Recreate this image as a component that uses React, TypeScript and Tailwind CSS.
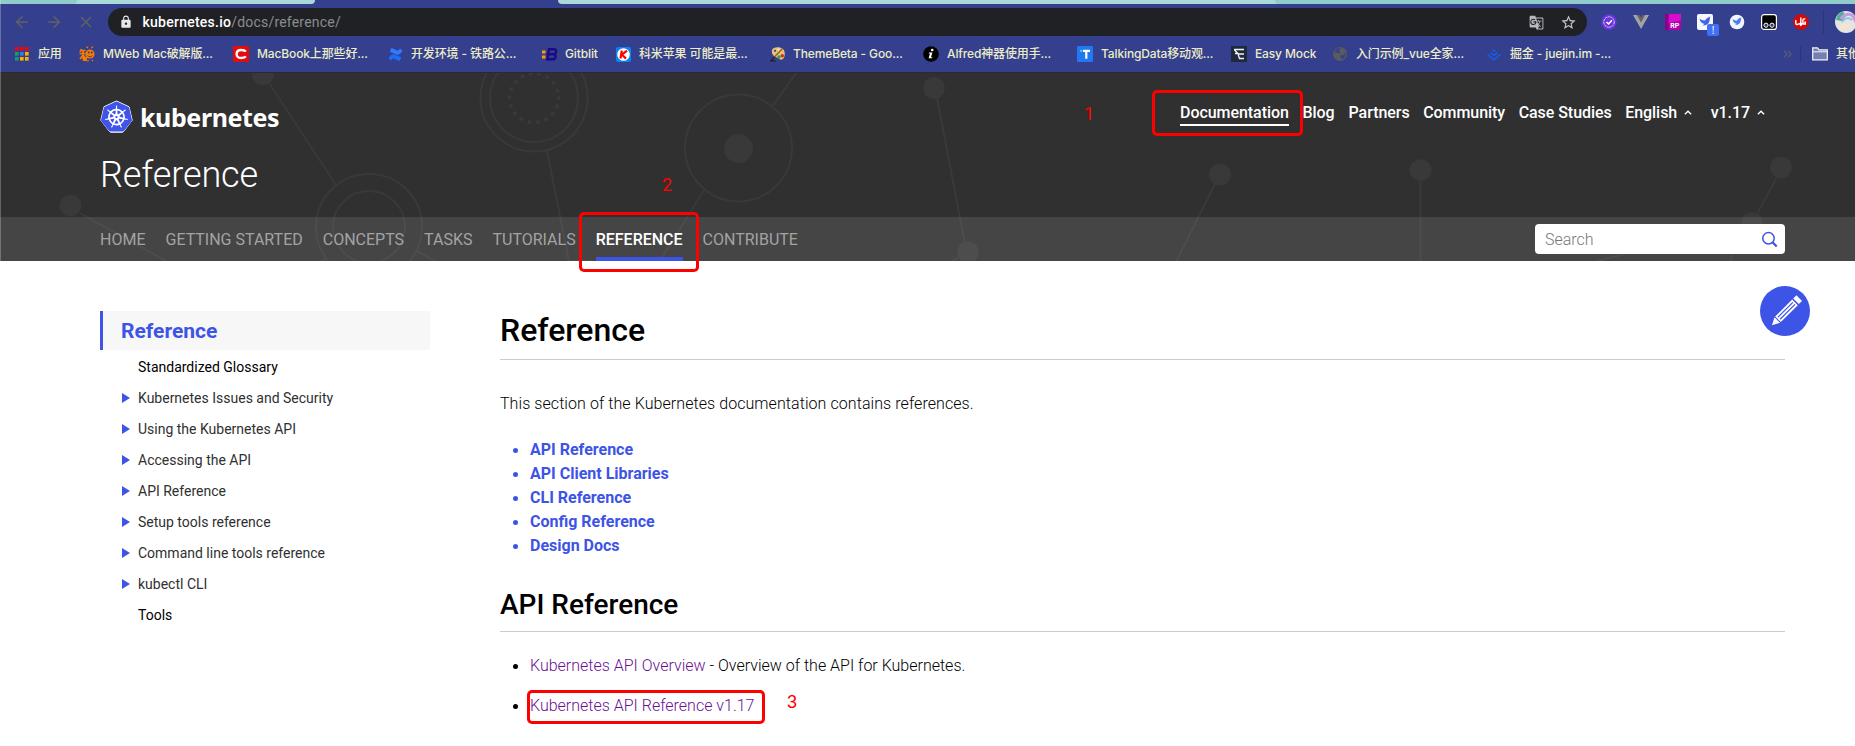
import React from "react";
import { SiKubernetes } from "react-icons/si";
import { MdLock, MdGTranslate, MdStarBorder } from "react-icons/md";
import { FiArrowLeft, FiArrowRight, FiX } from "react-icons/fi";

const APP_COLORS = ["#f00", "#f00", "#f00", "#12a06a", "#2f7df6", "#fbb000", "#12a06a", "#fbb000", "#fbb000"];

function AppsIcon() {
  return (
    <svg width="14" height="14" viewBox="0 0 14 14" className="shrink-0">
      {APP_COLORS.map((c, i) => (
        <rect key={i} x={(i % 3) * 5} y={Math.floor(i / 3) * 5} width="3.6" height="3.6" fill={c} />
      ))}
    </svg>
  );
}

function MwebIcon() {
  return (
    <svg width="16" height="16" viewBox="0 0 16 16" className="shrink-0">
      <g stroke="#f57c00" fill="none" strokeWidth="1.6">
        <path d="M2.5 3 1 6M2 4.5h4.5M.5 7.5h6M4 5v4l-3 4M4 9l2.5 3" />
        <path d="M9 2 7.5.8M12.5 2l1.5-1.4M9.5 14l-1 1.5M13 14l1 1.2" strokeWidth="1.2" />
      </g>
      <circle cx="11" cy="8" r="4.6" fill="#f57c00" />
      <circle cx="9.8" cy="6.5" r="1" fill="#34408d" />
      <circle cx="12.8" cy="6.5" r="1" fill="#34408d" />
      <path d="M8.8 9.5c1 1.8 3.6 1.8 4.6 0" stroke="#34408d" fill="none" />
      <path d="M3 11h5v4H4z" fill="#f57c00" />
    </svg>
  );
}

function RedCIcon() {
  return (
    <svg width="16" height="16" viewBox="0 0 16 16" className="shrink-0">
      <rect width="16" height="16" fill="#e30b0b" />
      <path d="M12.8 5.6C12 4.4 10.300 4 8.300 4 5.400 4 3.600 5.600 3.600 8s1.800 4 4.700 4c2 0 3.700-.4 4.500-1.600" fill="none" stroke="#fff" strokeWidth="2.3" />
    </svg>
  );
}

function ConfluenceIcon() {
  return (
    <svg width="15" height="15" viewBox="0 0 15 15" className="shrink-0">
      <path d="M.6 11.300C3 7 5 6.400 8.500 8.200l4.800 2.300-1.700 3.800-4.600-2.200c-2-1-2.700-.6-4 1.500z" fill="#1f6cf5" />
      <path d="M14.400 3.700C12 8 10 8.600 6.500 6.800L1.700 4.500 3.400.7 8 2.900c2 1 2.700.6 4-1.500z" fill="#2f7bff" />
    </svg>
  );
}

function GitblitIcon() {
  return (
    <svg width="16" height="15" viewBox="0 0 16 15" className="shrink-0">
      <rect x="0" y="3.500" width="3.500" height="3" fill="#ff9a00" />
      <rect x="0" y="8.500" width="3.500" height="3" fill="#ff9a00" />
      <path d="M7 2.200h5.200c2.600 0 2.600 4.400-.2 4.900 2.600.5 1.800 5.200-1.200 5.200H5.300z M4.500 7.200H12" fill="none" stroke="#1a0a86" strokeWidth="2.400" />
    </svg>
  );
}

function KIcon() {
  return (
    <svg width="15" height="15" viewBox="0 0 15 15" className="shrink-0">
      <rect width="15" height="15" rx="2" fill="#0a84ee" />
      <circle cx="7.500" cy="7.500" r="6.300" fill="#fff" />
      <path d="M5.800 3.500 4.500 11.500M11 3.700 6 7.700l4 3.900" fill="none" stroke="#f00" strokeWidth="2.200" />
    </svg>
  );
}

function PaletteIcon() {
  return (
    <svg width="16" height="16" viewBox="0 0 16 16" className="shrink-0">
      <path d="M2 4C3 .8 10 .5 13 3c3 2.800 2 9.600-1 10.500-2.600.8-3-1.800-5-2C4.500 11.200 1 8 2 4z" fill="#e8c07c" />
      <path d="M12.500 2.500 4 11.500" stroke="#8a5a22" strokeWidth="1.200" />
      <path d="M4.500 11 .5 14.800l5 .2" stroke="#222" strokeWidth="1.300" fill="none" />
      <circle cx="5" cy="4.800" r="1.100" fill="#34408d" />
      <circle cx="9" cy="11" r="1.700" fill="#18a84b" />
      <circle cx="12.300" cy="9.700" r="1.700" fill="#e1261c" />
      <circle cx="8.500" cy="3.600" r="1.100" fill="#fff2a8" />
    </svg>
  );
}

function InfoIcon() {
  return (
    <svg width="16" height="16" viewBox="0 0 16 16" className="shrink-0">
      <circle cx="8" cy="8" r="7.800" fill="#000" />
      <circle cx="9.200" cy="4" r="1.300" fill="#fff" />
      <path d="M6 6.500h3.400L8 11.200h1.200v1H5.600L7 7.500H5.800z" fill="#fff" />
    </svg>
  );
}

function TalkingIcon() {
  return (
    <svg width="16" height="16" viewBox="0 0 16 16" className="shrink-0">
      <rect width="16" height="16" rx="1" fill="#2477f2" />
      <path d="M6 4.800h7M9.300 4v8.800" stroke="#fff" strokeWidth="2.200" />
      <rect x="3" y="3.800" width="2.400" height="2" fill="#22e6c4" />
    </svg>
  );
}

function EasyMockIcon() {
  return (
    <svg width="16" height="16" viewBox="0 0 16 16" className="shrink-0">
      <rect width="16" height="16" fill="#1d2a3c" />
      <path d="M3 3.500h10M3.500 4l4 4H13M4 7.500h2M7 8l1.500 4.500H13" fill="none" stroke="#f4f4f4" strokeWidth="1.300" />
    </svg>
  );
}

function GlobeIcon() {
  return (
    <svg width="14" height="14" viewBox="0 0 14 14" className="shrink-0">
      <circle cx="7" cy="7" r="7" fill="#5a5b5f" />
      <path d="M1.500 5C3 5.500 5 6.500 7 6.200 7.500 4.500 5.500 4 6.500 2L9 1C5 0 2 2 1.500 5zM7 8.500c2-.5 4 .5 4.500-1.500l1-2c1 4-1 7-4 7.700C9 11 7 10.500 7 8.500z" fill="#36428c" />
    </svg>
  );
}

function JuejinIcon() {
  return (
    <svg width="14" height="13" viewBox="0 0 14 13" className="shrink-0">
      <path d="M.6 6.500 7 11.700l6.400-5.200M3.500 4.700 7 7.400l3.500-2.700M5.600 2 7 3.200 8.400 2" fill="none" stroke="#1660f5" strokeWidth="1.400" />
    </svg>
  );
}

const bookmarks: { label: string; icon: React.ReactNode; left: string; text: string }[] = [
  { label: "应用", icon: <AppsIcon />, left: "w-[64px]", text: "ml-[9px]" },
  { label: "MWeb Mac破解版...", icon: <MwebIcon />, left: "w-[154px]", text: "ml-[8px]" },
  { label: "MacBook上那些好...", icon: <RedCIcon />, left: "w-[155px]", text: "ml-[8px]" },
  { label: "开发环境 - 铁路公...", icon: <ConfluenceIcon />, left: "w-[154px]", text: "ml-[8px]" },
  { label: "Gitblit", icon: <GitblitIcon />, left: "w-[74px]", text: "ml-[7px]" },
  { label: "科米苹果 可能是最...", icon: <KIcon />, left: "w-[154px]", text: "ml-[8px]" },
  { label: "ThemeBeta - Goo...", icon: <PaletteIcon />, left: "w-[153px]", text: "ml-[7px]" },
  { label: "Alfred神器使用手...", icon: <InfoIcon />, left: "w-[154px]", text: "ml-[8px]" },
  { label: "TalkingData移动观...", icon: <TalkingIcon />, left: "w-[154px]", text: "ml-[8px]" },
  { label: "Easy Mock", icon: <EasyMockIcon />, left: "w-[102px]", text: "ml-[8px]" },
  { label: "入门示例_vue全家...", icon: <GlobeIcon />, left: "w-[154px]", text: "ml-[9px]" },
  { label: "掘金 - juejin.im -...", icon: <JuejinIcon />, left: "w-[296px]", text: "ml-[9px]" },
];

function Extensions() {
  return (
    <div className="flex items-center">
      <svg width="16" height="16" viewBox="0 0 16 16" className="ml-[14px]">
        <circle cx="8" cy="8" r="7.700" fill="#6a35d9" />
        <circle cx="8" cy="8" r="5.200" fill="none" stroke="#d9ccff" strokeWidth="1" strokeDasharray="2.200 .6" />
        <path d="m5.500 8 2 1.900 3.500-3.700" fill="none" stroke="#fff" strokeWidth="1.500" />
      </svg>
      <svg width="16" height="14" viewBox="0 0 16 14" className="ml-4">
        <path d="M0 0h4l4 7 4-7h4L8 14z" fill="#a3a3a3" />
        <path d="M4 0h2.500L8 2.800 9.500 0H12L8 7z" fill="#666" />
      </svg>
      <svg width="16" height="16" viewBox="0 0 16 16" className="ml-4">
        <rect width="16" height="16" fill="#b400ac" />
        <rect width="3.500" height="16" fill="#8d0087" />
        <path d="M4 0h12v6L4 9z" fill="#d80bd0" />
        <text x="5.200" y="14" fontSize="7" fontWeight="700" fill="#fff" fontFamily="Roboto, sans-serif">RP</text>
      </svg>
      <div className="relative ml-4 h-4 w-4">
        <svg width="16" height="16" viewBox="0 0 16 16">
          <rect width="16" height="16" rx="2" fill="#f6f8ff" />
          <path d="M2.500 4.500C5 6.500 7 6.500 8 6.500 9 4.500 10.500 3.500 13.500 2.500 12.500 4 13 5 12.500 7c-.6 3-3.500 4.800-7 4.500l2-1.500C4.500 9.500 3 7.500 2.500 4.500z" fill="#4662e8" />
        </svg>
        <span className="absolute left-[10px] top-[10px] flex h-3 w-3 items-center justify-center rounded-[2px] bg-[#4270f4] text-[10px] leading-none text-white">!</span>
      </div>
      <svg width="16" height="16" viewBox="0 0 16 16" className="ml-4">
        <circle cx="8" cy="8" r="7.300" fill="#f3f8ff" />
        <path d="M3.500 5C5.500 6.500 7 6.800 8 6.600 8.600 5 10 4 12.500 3.400 11.700 4.800 12 5.600 11.700 7.200c-.6 2.600-2.700 4-5.700 3.800l1.700-1.300C5.200 9.300 3.900 7.500 3.500 5z" fill="#4c7cf0" />
      </svg>
      <svg width="16" height="16" viewBox="0 0 16 16" className="ml-4">
        <rect x=".6" y=".6" width="14.800" height="14.800" rx="2.500" fill="#000" stroke="#fff" strokeWidth="1.200" />
        <circle cx="5" cy="11.200" r="2.100" fill="#2b3c6b" stroke="#fff" strokeWidth="1" />
        <circle cx="11" cy="11.200" r="2.100" fill="#2b3c6b" stroke="#fff" strokeWidth="1" />
      </svg>
      <svg width="16" height="16" viewBox="0 0 16 16" className="ml-4">
        <circle cx="8" cy="8" r="7.900" fill="#d20a0a" />
        <path d="M2.800 6v3.300c0 1.600 2.400 1.600 2.600.3M7.800 3.600v6M12.300 5.200c-1.600-.9-2.400.2-2.400 1.300v3.500h2.400V8.200h-1" fill="none" stroke="#fff" strokeWidth="1.400" />
        <path d="M5.200 9h5.200l-2.600 3.400z" fill="#fff" />
      </svg>
      <span className="ml-[14px] h-[24px] w-px bg-[#2a3679]" />
      <svg width="22" height="22" viewBox="0 0 22 22" className="ml-[11px] shrink-0">
        <circle cx="11" cy="11" r="11" fill="#e4e4e2" />
        <path d="M1 9A11 11 0 0 1 8 .6l3 4.400-4 5z" fill="#4fae92" />
        <path d="M6 8c3-5 8-6 12-3l3 6" fill="none" stroke="#c49be0" strokeWidth="3" />
        <path d="M7 11c2-4 7-5 10-2" fill="none" stroke="#7fc7e8" strokeWidth="2" />
        <path d="M4 17c1-4 4-5 8-4l3-3-1 6-6 4z" fill="#f5e4cf" />
      </svg>
    </div>
  );
}

function BrowserChrome() {
  return (
    <div className="h-[72px] bg-[#34408d]">
      <div className="flex h-1">
        <div className="w-[315px] overflow-hidden rounded-br-[5px] bg-[#a9dad9]">
          <div className="h-1 w-[77px] rounded-br-[4px] bg-[#90cccb]" />
        </div>
        <div className="w-[243px]" />
        <div className="flex flex-1 justify-end rounded-bl-[5px] bg-[#a9dad9]">
          <div className="w-[580px] rounded-bl-[4px] bg-[#90cccb]" />
        </div>
      </div>
      <div className="flex h-9 items-center overflow-hidden">
        <div className="flex w-[108px] shrink-0 items-center gap-[14px] pl-[13px] text-[#606167]">
          <FiArrowLeft size={18} />
          <FiArrowRight size={18} />
          <FiX size={18} />
        </div>
        <div className="flex h-7 w-[1479px] shrink-0 items-center rounded-full bg-[#202124] pl-[11px] pr-[10px] font-['Roboto',sans-serif] text-[14px]">
          <MdLock size={14} className="text-[#e8e8e8]" />
          <span className="ml-[9.500px] font-medium tracking-[0.25px] text-white">kubernetes.io</span>
          <span className="tracking-[0.2px] text-[#8b8c8f]">/docs/reference/</span>
          <span className="flex-1" />
          <MdGTranslate size={15} className="text-[#b9babd]" />
          <MdStarBorder size={17} className="ml-4 text-[#c8c9cc]" />
        </div>
        <Extensions />
      </div>
      <div className="flex h-7 items-center overflow-hidden whitespace-nowrap pl-[15px] font-['Inter','Noto_Sans_CJK_SC',sans-serif] text-[12px] font-medium text-[#ecedc6]">
        {bookmarks.map((b) => (
          <div key={b.label} className={`flex shrink-0 items-center ${b.left}`}>
            {b.icon}
            <span className={`tracking-[-0.13px] ${b.text}`}>{b.label}</span>
          </div>
        ))}
        <svg width="9" height="8" viewBox="0 0 9 8" className="shrink-0">
          <path d="m1 .8 3 3.200-3 3.200M5 .8 8 4 5 7.200" fill="none" stroke="#555a78" strokeWidth="1.400" />
        </svg>
        <span className="ml-[8px] h-4 w-px shrink-0 bg-[#2a3679]" />
        <svg width="16" height="14" viewBox="0 0 16 14" className="ml-[11px] shrink-0">
          <path d="M.7 12.800V.9h4.800l1.500 2h8.300v9.900z" fill="#767fb4" stroke="#f5f5f5" strokeWidth="1.200" />
          <path d="M.7 4.800h14.600" stroke="#f5f5f5" />
        </svg>
        <span className="ml-[8px] w-[19px] shrink-0 overflow-hidden">其他</span>
      </div>
    </div>
  );
}

function NetworkBackdrop() {
  return (
    <svg className="absolute inset-0" width="1855" height="189" viewBox="0 72 1855 189">
      <g fill="none" stroke="#393939" strokeWidth="2">
        <path d="M269 83 336 185M80 213l86 48M326 259l-7 3M417 251l22 12M547 151l22 110h22M772.500 106 797 72M704 190l-44 71M937 98l28 146M950 262l12-6M1215 184l-39 78M1420.500 180v82M1777 177l-20 37M1730 262l5-13M1593 262l32-8" />
        <circle cx="369" cy="227" r="53" />
        <circle cx="369" cy="227" r="36" />
        <circle cx="534" cy="98" r="53.500" />
        <circle cx="534" cy="98" r="44" />
        <circle cx="738.500" cy="148" r="53.500" />
        <circle cx="534" cy="98" r="24.500" strokeWidth="4" strokeLinecap="round" strokeDasharray="0.100 8.450" />
      </g>
      <g fill="#393939">
        <circle cx="263" cy="74.500" r="10.800" />
        <circle cx="70.500" cy="205.500" r="10.800" />
        <circle cx="738.500" cy="148.500" r="14.500" />
        <circle cx="934" cy="88" r="10.800" />
        <circle cx="968" cy="252" r="10.800" />
        <circle cx="1220" cy="174.500" r="10.800" />
        <circle cx="1420.500" cy="170" r="10.800" />
        <circle cx="1781" cy="167.500" r="10.800" />
        <circle cx="1752" cy="223" r="10.800" />
      </g>
    </svg>
  );
}

function Caret() {
  return (
    <svg width="8" height="5" viewBox="0 0 8 5" className="mb-px">
      <path d="m.9 4.300 3.100-3 3.100 3" fill="none" stroke="#fff" strokeWidth="1.400" />
    </svg>
  );
}

const sections = ["HOME", "GETTING STARTED", "CONCEPTS", "TASKS", "TUTORIALS", "REFERENCE", "CONTRIBUTE"];

function SiteHeader() {
  return (
    <header className="relative bg-[#303030] text-white">
      <NetworkBackdrop />
      <div className="relative h-[145px] border-t border-[#28293a] pl-[100px]">
        <div className="flex h-[71px] justify-between pt-[27px]">
          <div className="flex h-[34px] items-center">
            <div className="relative h-[34px] w-[33px]">
              <svg width="33" height="34" viewBox="0 0 33 34" className="absolute inset-0">
                <path d="M16.500 1 29 6.800l3.200 13.400L23.600 31.500a2 2 0 0 1-1.500.7H11a2 2 0 0 1-1.500-.7L.8 20.200 4 6.800z" fill="#fff" stroke="#fff" strokeLinejoin="round" />
              </svg>
              <SiKubernetes size={31} className="absolute left-[1px] top-[1px] text-[#3f55ea]" />
            </div>
            <span className="ml-[7px] font-['Noto_Sans',sans-serif] text-[25px] font-bold leading-[34px] tracking-[-0.4px]">kubernetes</span>
          </div>
          <nav className="flex w-[675px] items-start font-['Roboto',sans-serif] text-[16px] font-medium leading-6 tracking-[-0.05px]">
            <a className="h-[26px] border-b-2 border-white leading-[26px]">Documentation</a>
            <a className="ml-[13.500px] leading-[26px]">Blog</a>
            <a className="ml-[14px] leading-[26px]">Partners</a>
            <a className="ml-[13.500px] leading-[26px]">Community</a>
            <a className="ml-[13.500px] leading-[26px]">Case Studies</a>
            <a className="ml-[13.500px] flex items-center gap-[7px] leading-[26px]">English <Caret /></a>
            <a className="ml-[18.500px] flex items-center gap-[7px] leading-[26px]">v1.17 <Caret /></a>
          </nav>
        </div>
        <h1 className="mt-[12px] font-['Roboto',sans-serif] text-[36px] font-[340] leading-[38px] tracking-[-0.1px]">Reference</h1>
      </div>
      <div className="relative flex h-[44px] items-center justify-between bg-white/10 pl-[100px] pr-[70px] font-['Roboto',sans-serif]">
        <nav className="flex h-full gap-5 text-[16px] font-[450] text-[#a3a3a3]">
          {sections.map((s) => (
            <a
              key={s}
              className={
                s === "REFERENCE"
                  ? "flex h-full items-center border-b-4 border-[#3d54e6] pt-[5px] font-medium text-white"
                  : "flex h-full items-center pt-px"
              }
            >
              {s}
            </a>
          ))}
        </nav>
        <div className="flex h-[30px] w-[250px] items-center justify-between rounded bg-white pl-[10px] pr-[7px] pt-px text-[16px] font-[330] text-[#777]">
          Search
          <svg width="17" height="17" viewBox="0 0 17 17">
            <circle cx="7.500" cy="7.200" r="5.700" fill="none" stroke="#3d54e6" strokeWidth="1.500" />
            <path d="m11.500 11.300 4.200 4.200" stroke="#3d54e6" strokeWidth="2.200" />
          </svg>
        </div>
      </div>
    </header>
  );
}

const tree = [
  { label: "Standardized Glossary", leaf: true },
  { label: "Kubernetes Issues and Security" },
  { label: "Using the Kubernetes API" },
  { label: "Accessing the API" },
  { label: "API Reference" },
  { label: "Setup tools reference" },
  { label: "Command line tools reference" },
  { label: "kubectl CLI" },
  { label: "Tools", leaf: true },
];

function Sidebar() {
  return (
    <aside className="w-[330px] shrink-0">
      <div className="mb-px flex h-[39px] items-center border-l-[3px] border-[#3d54e6] bg-[#f7f7f7] pl-[18px] text-[21px] font-bold text-[#3d54e6]">
        Reference
      </div>
      {tree.map((t) => (
        <div key={t.label} className={`flex h-[31px] items-center pl-[22px] text-[14px] ${t.leaf ? "text-black" : "text-[#303030]"}`}>
          <span className="w-4">
            {!t.leaf && (
              <svg width="8" height="10" viewBox="0 0 8 10" className="mt-px">
                <path d="M0 0v10l8-5z" fill="#3d54e6" />
              </svg>
            )}
          </span>
          {t.label}
        </div>
      ))}
    </aside>
  );
}

const toc = ["API Reference", "API Client Libraries", "CLI Reference", "Config Reference", "Design Docs"];

function Bullet({ blue }: { blue?: boolean }) {
  return (
    <span className="flex w-[30px] shrink-0 pl-[13px]">
      <span className={`h-[5px] w-[5px] rounded-full ${blue ? "bg-[#3d54e6]" : "bg-black"}`} />
    </span>
  );
}

function Pencil() {
  return (
    <svg width="50" height="50" viewBox="0 0 50 50">
      <circle cx="25" cy="25" r="25" fill="#3d54e6" />
      <g transform="translate(12 39.300) rotate(-45)">
        <path d="M0 0 7.500-4V4zM8.500-4H32.500V4H8.500zM34-4h4.500V4H34z" fill="#fff" />
        <path d="M10-1.500h21M10 1.500h21" stroke="#3d54e6" strokeWidth="1.200" />
      </g>
    </svg>
  );
}

export default function App() {
  return (
    <div className="relative h-[746px] w-[1855px] overflow-hidden bg-white text-black">
      <BrowserChrome />
      <SiteHeader />
      <main className="flex pl-[100px] pt-[50px] font-['Roboto',sans-serif] text-[16px] leading-6">
        <Sidebar />
        <article className="ml-[70px] w-[1285px]">
          <h2 className="h-[49px] border-b border-[#ccc] text-[32px] font-medium leading-[38px]">Reference</h2>
          <p className="mt-8 font-[340] tracking-[0.07px]">This section of the Kubernetes documentation contains references.</p>
          <ul className="mt-[22px] font-bold text-[#3d54e6]">
            {toc.map((t) => (
              <li key={t} className="flex items-center">
                <Bullet blue />
                {t}
              </li>
            ))}
          </ul>
          <h3 className="mt-[32px] h-[42px] border-b border-[#ccc] text-[28px] font-medium leading-[29px]">API Reference</h3>
          <ul className="mt-[22px] flex flex-col gap-4 font-[340]">
            <li className="flex items-center">
              <Bullet />
              <span>
                <a className="text-[#6b0f93]">Kubernetes API Overview</a> - Overview of the API for Kubernetes.
              </span>
            </li>
            <li className="flex items-center">
              <Bullet />
              <a className="text-[#6b0f93]">Kubernetes API Reference v1.17</a>
            </li>
          </ul>
        </article>
      </main>

      <button className="absolute left-[1760px] top-[286px]" aria-label="Edit">
        <Pencil />
      </button>

      <div className="absolute left-[1152px] top-[90px] h-[46px] w-[151px] rounded-[5px] border-[3px] border-[#f00]" />
      <div className="absolute left-[579px] top-[212px] h-[60px] w-[120px] rounded-[5px] border-[3px] border-[#f00]" />
      <div className="absolute left-[527px] top-[690px] h-[34px] w-[238px] rounded-[5px] border-[3px] border-[#f00]" />
      <span className="absolute left-[1084px] top-[104px] font-['Roboto',sans-serif] text-[18px] leading-5 text-[#f00]">1</span>
      <span className="absolute left-[662px] top-[175px] font-['Roboto',sans-serif] text-[18px] leading-5 text-[#f00]">2</span>
      <span className="absolute left-[787px] top-[692px] font-['Liberation_Sans',sans-serif] text-[18px] leading-5 text-[#f00]">3</span>
      <div className="absolute left-0 top-0 h-[261px] w-px bg-white/25" />
    </div>
  );
}
